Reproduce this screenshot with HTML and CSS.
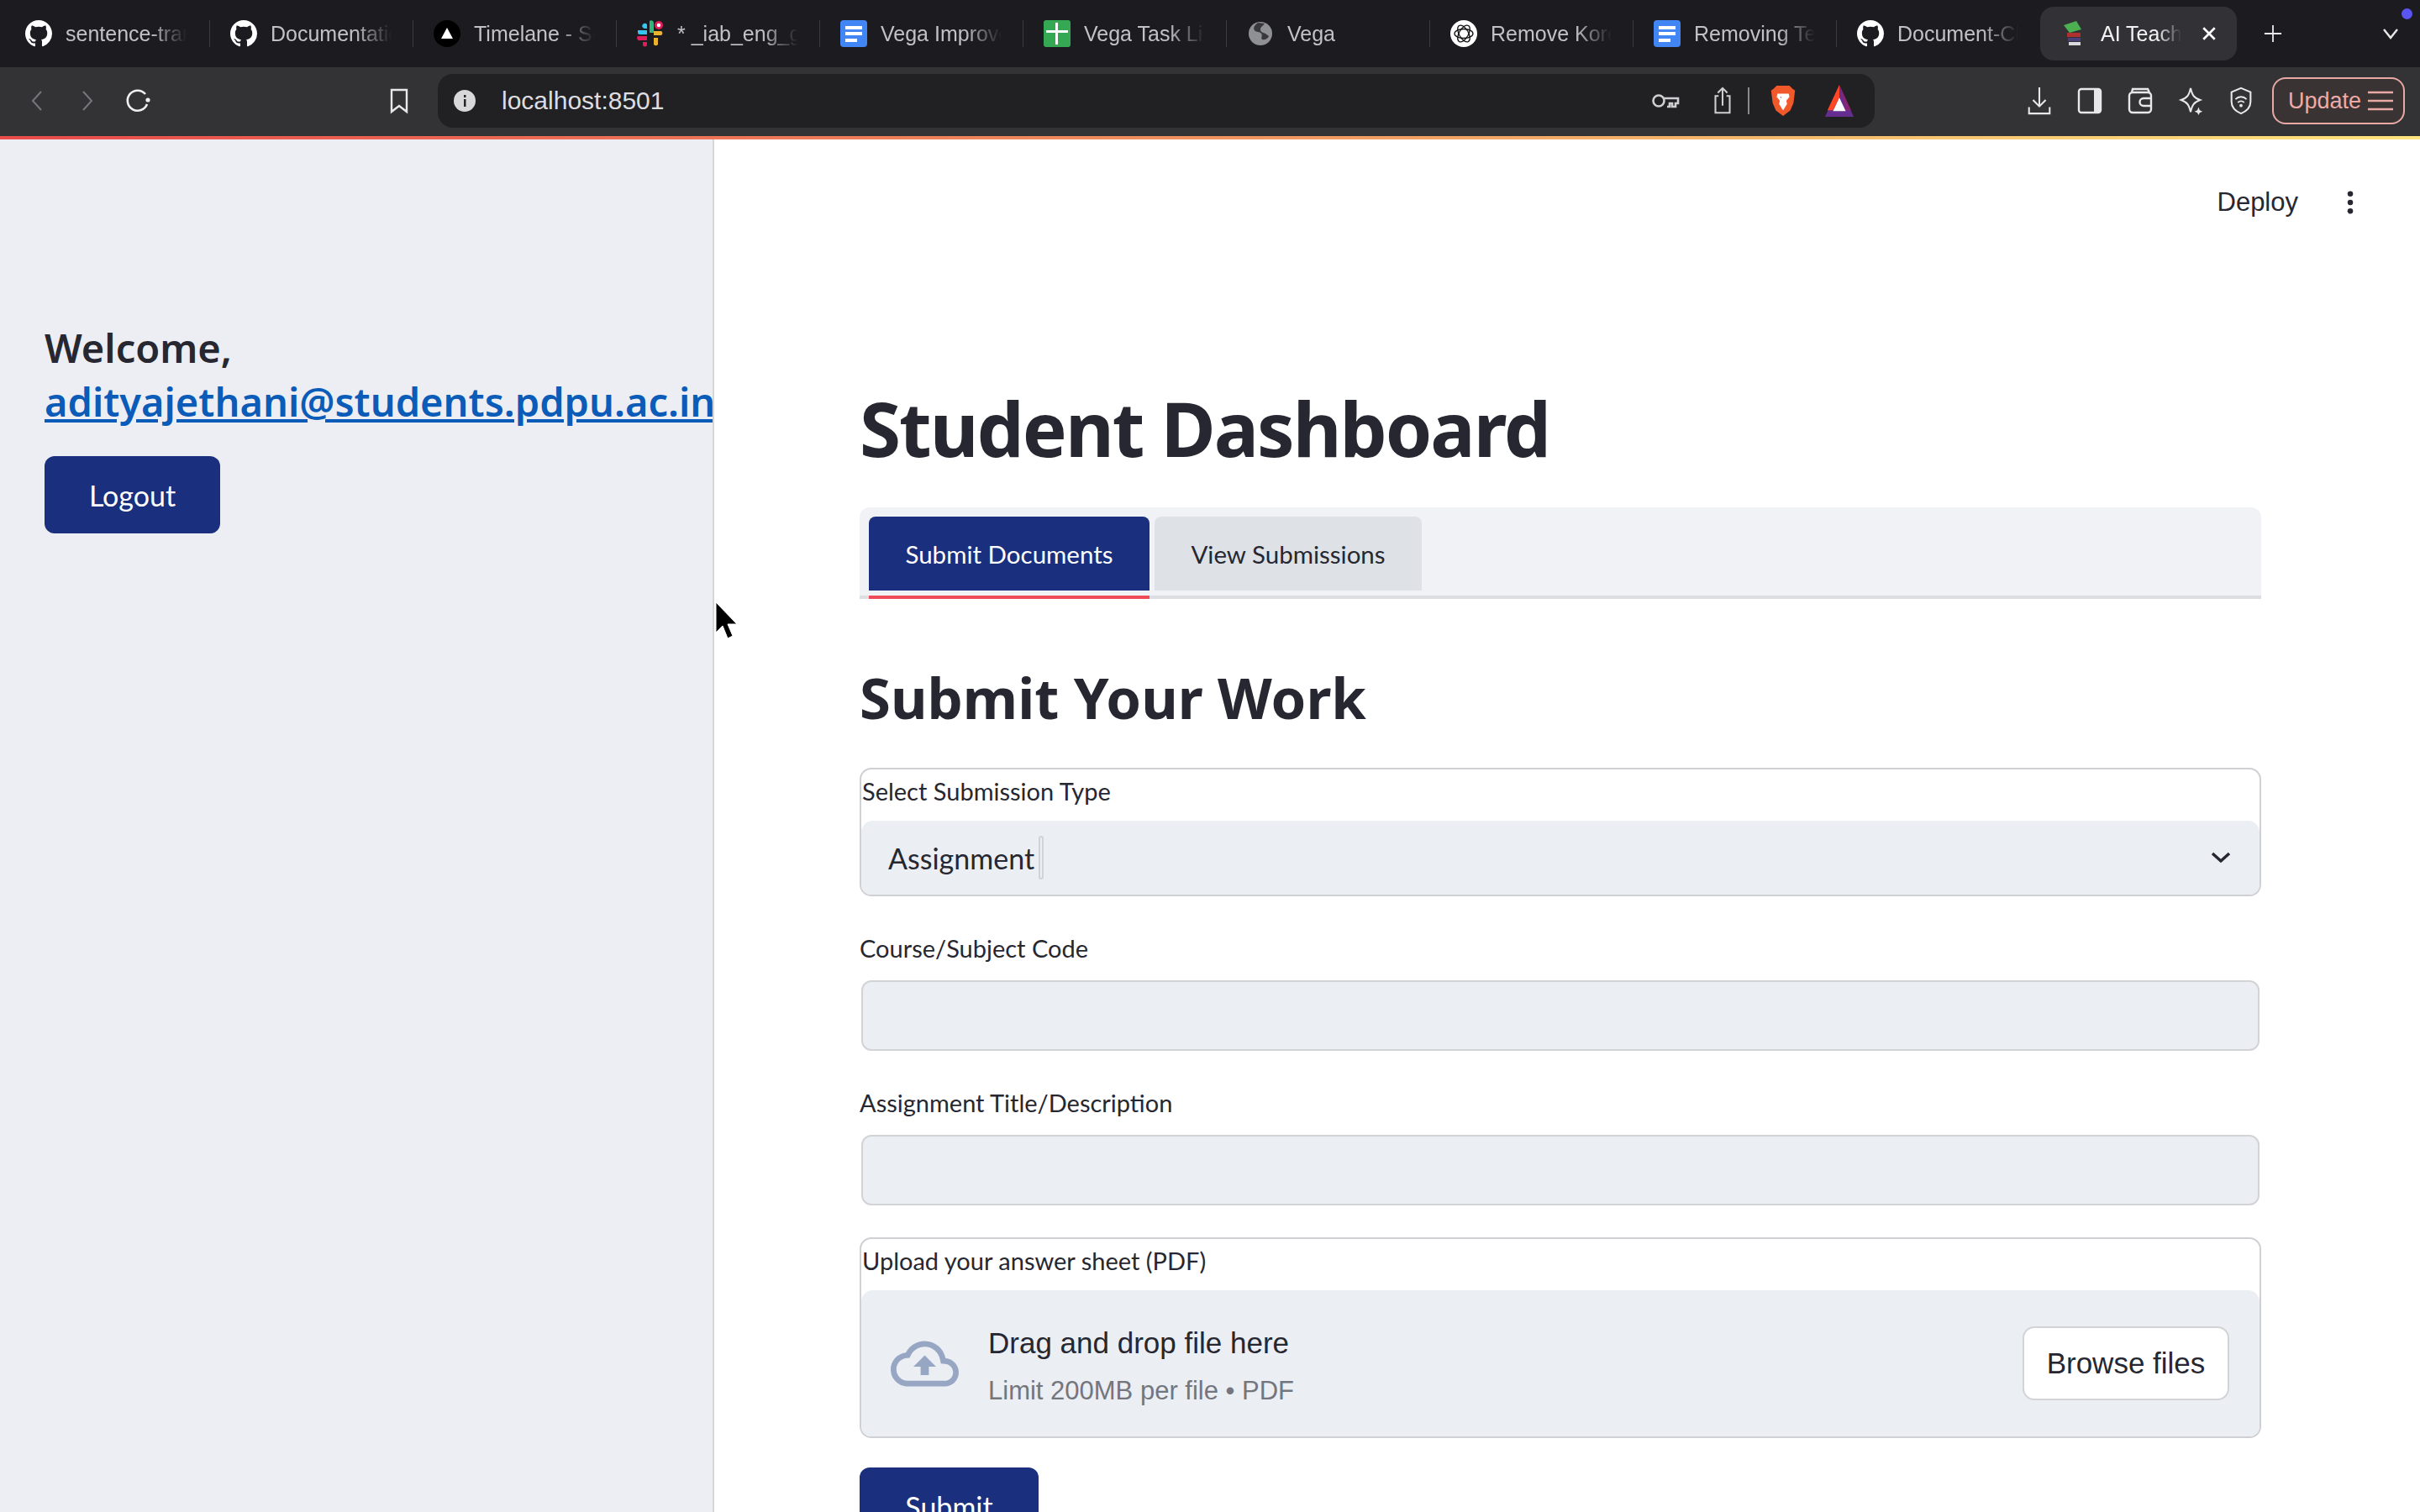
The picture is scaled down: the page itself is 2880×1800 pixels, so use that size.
FILE: index.html
```html
<!DOCTYPE html>
<html lang="en">
<head>
    <meta charset="UTF-8">
    <meta name="viewport" content="width=device-width, initial-scale=1.0">
    <title>AI Teacher</title>
    <link rel="stylesheet" href="styles.css">
</head>
<body>
    <svg class="icon-defs" width="0" height="0">
        <symbol id="github" viewBox="0 0 16 16"><path fill="#fff" d="M8 0C3.58 0 0 3.58 0 8c0 3.54 2.29 6.53 5.47 7.59.4.07.55-.17.55-.38 0-.19-.01-.82-.01-1.49-2.01.37-2.53-.49-2.69-.94-.09-.23-.48-.94-.82-1.13-.28-.15-.68-.52-.01-.53.63-.01 1.08.58 1.23.82.72 1.21 1.87.87 2.33.66.07-.52.28-.87.51-1.07-1.78-.2-3.64-.89-3.64-3.95 0-.87.31-1.59.82-2.15-.08-.2-.36-1.02.08-2.12 0 0 .67-.21 2.2.82.64-.18 1.32-.27 2-.27.68 0 1.36.09 2 .27 1.53-1.04 2.2-.82 2.2-.82.44 1.1.16 1.92.08 2.12.51.56.82 1.27.82 2.15 0 3.07-1.87 3.75-3.65 3.95.29.25.54.73.54 1.48 0 1.07-.01 1.93-.01 2.2 0 .21.15.46.55.38A8.013 8.013 0 0016 8c0-4.42-3.58-8-8-8z"/></symbol>
        <symbol id="gdoc" viewBox="0 0 32 32"><rect x="0" y="0" width="32" height="32" rx="4" fill="#4285f4"/><path fill="#fff" d="M6 7h20v4H6zM6 14h20v4H6zM6 22h14v4H6z"/></symbol>
    </svg>

    <div class="tabstrip">
        <div class="tab tab-first"><svg class="favicon"><use href="#github"/></svg><span class="tab-title">sentence-transformers</span></div>
        <div class="tab"><svg class="favicon"><use href="#github"/></svg><span class="tab-title">Documentation</span></div>
        <div class="tab">
            <svg class="favicon" viewBox="0 0 32 32"><circle cx="16" cy="16" r="16" fill="#000"/><path fill="#fff" d="M16 9l7 13H9z"/></svg>
            <span class="tab-title">Timelane - Scheduler</span>
        </div>
        <div class="tab">
            <svg class="favicon" viewBox="0 0 32 32">
                <path fill="#36c5f0" d="M1 12h11v5H3.500a2.500 2.500 0 0 1-2.500-2.500zM7 5a3 3 0 0 1 5 0v5H9a3 3 0 0 1-2-5z"/>
                <path fill="#2eb67d" d="M15 1a3 3 0 0 1 5 2v12h-5z"/>
                <circle cx="26" cy="6" r="5" fill="#e01e5a"/><circle cx="26" cy="6" r="2.200" fill="#fff"/>
                <path fill="#ecb22e" d="M20 13h9a3 3 0 0 1 0 5h-9zM20 21h5v8a3 3 0 0 1-5 0z"/>
                <path fill="#e01e5a" d="M1 19h11v5H4a3 3 0 0 1-3-5zM7 26h5v3a2.500 2.500 0 0 1-5 0z"/>
            </svg>
            <span class="tab-title">* _iab_eng_general</span>
        </div>
        <div class="tab"><svg class="favicon"><use href="#gdoc"/></svg><span class="tab-title">Vega Improvements</span></div>
        <div class="tab">
            <svg class="favicon" viewBox="0 0 32 32"><rect width="32" height="32" rx="3" fill="#34a853"/><path fill="#fff" d="M14 3h3v26h-3zM3 12h26v3H3z"/></svg>
            <span class="tab-title">Vega Task List</span>
        </div>
        <div class="tab">
            <svg class="favicon" viewBox="0 0 32 32"><circle cx="16" cy="16" r="14" fill="#8f9094"/><path fill="#1c1c20" d="M13 3c-4 3-6 6-4 9s6 1 8 4-1 5 1 7c3 1 7-1 8-4l-4-3c-3-1-6-2-6-5s3-4 5-7z" opacity=".75"/></svg>
            <span class="tab-title">Vega</span>
        </div>
        <div class="tab">
            <svg class="favicon" viewBox="0 0 32 32"><circle cx="16" cy="16" r="16" fill="#fff"/><g fill="none" stroke="#111" stroke-width="1.300"><ellipse cx="16" cy="16" rx="11" ry="5.500"/><ellipse cx="16" cy="16" rx="11" ry="5.500" transform="rotate(60 16 16)"/><ellipse cx="16" cy="16" rx="11" ry="5.500" transform="rotate(120 16 16)"/></g></svg>
            <span class="tab-title">Remove Korean</span>
        </div>
        <div class="tab"><svg class="favicon"><use href="#gdoc"/></svg><span class="tab-title">Removing Text</span></div>
        <div class="tab"><svg class="favicon"><use href="#github"/></svg><span class="tab-title">Document-Classifier</span></div>
        <div class="tab tab-active">
            <svg class="favicon" viewBox="0 0 32 32">
                <path fill="#4caf50" d="M4 6l15-5 6 10-14 4z"/>
                <path fill="#b03030" d="M8 15h16v5H8z"/>
                <path fill="#4a3f7a" d="M9 21h15v4H9z"/>
                <path fill="#d9d9e0" d="M10 26h14v4H10z"/>
            </svg>
            <span class="tab-title">AI Teacher</span>
            <svg class="tab-close" viewBox="0 0 16 16"><path stroke="#fff" stroke-width="2.400" d="M2 2l12 12M14 2L2 14"/></svg>
        </div>
        <svg class="new-tab" viewBox="0 0 24 24"><path stroke="#e8e8e8" stroke-width="2" d="M12 1v22M1 12h22"/></svg>
        <div class="strip-right">
            <svg class="strip-chevron" viewBox="0 0 20 14"><path fill="none" stroke="#e8e8e8" stroke-width="2.400" d="M2 2l8 10 8-10"/></svg>
        </div>
        <span class="notify-dot"></span>
    </div>

    <div class="toolbar">
        <svg class="nav-icon nav-back" viewBox="0 0 16 28"><path fill="none" stroke="#77777b" stroke-width="2" d="M13 3L3 14l10 11"/></svg>
        <svg class="nav-icon nav-forward" viewBox="0 0 16 28"><path fill="none" stroke="#77777b" stroke-width="2" d="M3 3l10 11L3 25"/></svg>
        <svg class="nav-icon nav-reload" viewBox="0 0 32 32"><path fill="none" stroke="#f0f0f0" stroke-width="2.600" d="M26 20a12 12 0 1 1-2-12"/><circle cx="27" cy="15" r="2.600" fill="#f0f0f0"/></svg>
        <svg class="nav-icon nav-bookmark" viewBox="0 0 24 32"><path fill="none" stroke="#e8e8e8" stroke-width="2.400" d="M3 3h18v26l-9-7-9 7z"/></svg>
        <div class="urlbar">
            <svg class="url-info" viewBox="0 0 26 26"><circle cx="13" cy="13" r="13" fill="#d8d8da"/><path fill="#26262a" d="M12 11h2.500v9H12zM12 6h2.500v3H12z"/></svg>
            <span class="url-text">localhost:8501</span>
            <div class="url-actions">
                <svg class="url-icon url-key" viewBox="0 0 34 26"><g fill="none" stroke="#cfcfd1" stroke-width="2.600"><circle cx="9" cy="13" r="6.500"/><path d="M15 10h17v6h-3v4h-4v-4h-3v4h-3"/></g></svg>
                <svg class="url-icon url-share" viewBox="0 0 26 36"><g fill="none" stroke="#cfcfd1" stroke-width="2.200"><path d="M8 12H4v21h18V12h-4M13 24V2M7 8l6-6 6 6"/></g></svg>
                <span class="url-divider"></span>
                <svg class="url-logo" viewBox="0 0 32 40"><path fill="#f1592a" d="M8 1h16l4 4 3 2-2 16-4 9-9 7-9-7-4-9L1 7l3-2z"/><path fill="#fff" d="M9 11h14l1 4-4 5 1 4-5 8-5-8 1-4-4-5zM12 15l2 2v-2zM20 15l-2 2v-2z"/></svg>
                <svg class="url-logo" viewBox="0 0 36 40"><path fill="#662d91" d="M18 0l18 40H0z"/><path fill="#ff4724" d="M18 0v16l-8 16H3z"/><path fill="#fff" d="M18 16l8 17H10z"/><path fill="#9e1f63" d="M18 0l15 32h-7z" opacity=".6"/></svg>
            </div>
        </div>
        <div class="toolbar-actions">
            <svg class="tool-icon" viewBox="0 0 30 36"><g fill="none" stroke="#e8e8e8" stroke-width="2.200"><path d="M15 1v24M7 17l8 8 8-8M2 26v8h26v-8"/></g></svg>
            <svg class="tool-icon" viewBox="0 0 30 32"><rect x="2" y="2" width="26" height="28" rx="3" fill="none" stroke="#e8e8e8" stroke-width="2.400"/><path fill="#e8e8e8" d="M20 2h8v28h-8z"/></svg>
            <svg class="tool-icon" viewBox="0 0 30 32"><g fill="none" stroke="#e8e8e8" stroke-width="2.400"><rect x="2" y="6" width="26" height="24" rx="4"/><path d="M5 6l1-4h18l2 4M28 13H19a4 4 0 0 0 0 9h9"/></g></svg>
            <svg class="tool-icon" viewBox="0 0 30 36"><path fill="none" stroke="#e8e8e8" stroke-width="2.200" d="M15 2c2 9 4 12 12 15-8 3-10 6-12 15-2-9-4-12-12-15 8-3 10-6 12-15z"/><path fill="#e8e8e8" d="M25 26l1.500 4 3.500 1.500-3.500 1.500-1.500 3-1.500-3-3.500-1.500 3.500-1.500z"/></svg>
            <svg class="tool-icon" viewBox="0 0 28 36"><path fill="none" stroke="#e8e8e8" stroke-width="2.200" d="M14 2l12 5v12c0 7-5 12-12 15C7 31 2 26 2 19V7z"/><path fill="none" stroke="#e8e8e8" stroke-width="2" d="M7 16c4-4 10-4 14 0M10 20c2.500-2 5.500-2 8 0"/><circle cx="14" cy="24" r="2" fill="#e8e8e8"/></svg>
            <div class="update-btn">
                <span>Update</span>
                <svg class="update-menu" viewBox="0 0 30 24"><path stroke="#e8a9a5" stroke-width="2.400" d="M0 2h30M0 12h30M0 22h30"/></svg>
            </div>
        </div>
    </div>
    <div class="load-line"></div>

    <div class="app">
        <aside class="sidebar">
            <h3 class="welcome">Welcome,<br><a class="email" href="#">adityajethani@students.pdpu.ac.in</a></h3>
            <button class="primary-btn logout-btn">Logout</button>
        </aside>

        <main class="main">
            <div class="app-header">
                <span class="deploy">Deploy</span>
                <svg class="kebab" viewBox="0 0 8 32"><circle cx="4" cy="5" r="3.500"/><circle cx="4" cy="16" r="3.500"/><circle cx="4" cy="27" r="3.500"/></svg>
            </div>

            <h1 class="page-title">Student Dashboard</h1>

            <div class="st-tabs">
                <div class="st-tab st-tab-active">Submit Documents</div>
                <div class="st-tab">View Submissions</div>
            </div>

            <h2 class="section-title">Submit Your Work</h2>

            <div class="boxed-field">
                <label class="boxed-label">Select Submission Type</label>
                <div class="select-control">
                    <span class="select-value">Assignment</span>
                    <span class="select-caret"></span>
                    <svg class="select-chevron" viewBox="0 0 24 14"><path fill="none" stroke="#262730" stroke-width="3.500" d="M2 2l10 9 10-9"/></svg>
                </div>
            </div>

            <label class="field-label label-course">Course/Subject Code</label>
            <div class="text-input"></div>

            <label class="field-label label-title">Assignment Title/Description</label>
            <div class="text-input"></div>

            <div class="boxed-field upload-field">
                <label class="boxed-label">Upload your answer sheet (PDF)</label>
                <div class="dropzone">
                    <svg class="cloud" viewBox="0 0 24 24"><path fill="#97a6c3" d="M19.350 10.040C18.670 6.590 15.640 4 12 4 9.110 4 6.600 5.640 5.350 8.040 2.340 8.360 0 10.910 0 14c0 3.310 2.690 6 6 6h13c2.760 0 5-2.240 5-5 0-2.640-2.050-4.780-4.650-4.960zM19 18H6c-2.210 0-4-1.790-4-4 0-2.050 1.530-3.760 3.560-3.970l1.070-.11.5-.95C8.080 7.140 9.940 6 12 6c2.620 0 4.880 1.860 5.390 4.430l.3 1.500 1.530.11c1.560.1 2.780 1.410 2.780 2.960 0 1.650-1.350 3-3 3zM8 13h2.550v3h2.900v-3H16l-4-4z"/></svg>
                    <div class="drop-text">
                        <div class="drop-title">Drag and drop file here</div>
                        <div class="drop-limit">Limit 200MB per file • PDF</div>
                    </div>
                    <button class="browse-btn">Browse files</button>
                </div>
            </div>

            <button class="primary-btn submit-btn">Submit</button>
        </main>
    </div>

    <svg class="mouse-cursor" viewBox="0 0 28 48"><path fill="#000" stroke="#fff" stroke-width="1" d="M1 1v36l8-8 6 15 6-3-6-14h11z"/></svg>
</body>
</html>
```

FILE: styles.css
```css
* {
    box-sizing: border-box;
}

html, body {
    margin: 0;
    height: 1800px;
    overflow: hidden;
    background-color: #fff;
}

body {
    display: flex;
    flex-direction: column;
    font-family: "Lato", "Noto Sans", sans-serif;
    color: #262730;
}

.icon-defs {
    position: absolute;
}

/* browser tabs */
.tabstrip {
    display: flex;
    align-items: center;
    height: 80px;
    padding-left: 6px;
    background-color: #1c1c20;
    font-family: "Liberation Sans", sans-serif;
    position: relative;
}

.tab {
    display: flex;
    align-items: center;
    width: 242px;
    height: 64px;
    padding-left: 24px;
    position: relative;
    flex-shrink: 0;
}

.tab-first {
    width: 244px;
}

.tab::after {
    content: "";
    position: absolute;
    right: 0;
    top: 16px;
    width: 1px;
    height: 32px;
    background-color: #3c3c40;
}

.tab:nth-child(10)::after,
.tab-active::after {
    display: none;
}

.favicon {
    width: 32px;
    height: 32px;
    flex-shrink: 0;
}

.tab-title {
    width: 144px;
    margin-left: 16px;
    font-size: 25px;
    color: #c2c2c5;
    white-space: nowrap;
    overflow: hidden;
    -webkit-mask-image: linear-gradient(to right, #000 70%, transparent 100%);
    mask-image: linear-gradient(to right, #000 70%, transparent 100%);
}

.tab-active {
    width: 234px;
    padding-left: 24px;
    background-color: #323236;
    border-radius: 16px;
}

.tab-active .tab-title {
    width: 96px;
    margin-left: 16px;
    color: #f2f2f2;
}

.tab-close {
    width: 18px;
    height: 18px;
    margin-left: 24px;
}

.new-tab {
    width: 22px;
    height: 22px;
    margin-left: 32px;
}

.strip-right {
    margin-left: auto;
    margin-right: 25px;
    display: flex;
}

.strip-chevron {
    width: 20px;
    height: 14px;
}

.notify-dot {
    position: absolute;
    left: 2858px;
    top: 10px;
    width: 13px;
    height: 13px;
    border-radius: 50%;
    background-color: #5a55f0;
}

/* browser toolbar */
.toolbar {
    display: flex;
    align-items: center;
    height: 82px;
    padding-bottom: 2px;
    background-color: #333336;
    flex-shrink: 0;
}

.nav-icon {
    flex-shrink: 0;
}

.nav-back {
    width: 16px;
    height: 28px;
    margin-left: 36px;
}

.nav-forward {
    width: 16px;
    height: 28px;
    margin-left: 44px;
}

.nav-reload {
    width: 32px;
    height: 32px;
    margin-left: 37px;
}

.nav-bookmark {
    width: 24px;
    height: 32px;
    margin-left: 282px;
}

.urlbar {
    display: flex;
    align-items: center;
    width: 1710px;
    height: 64px;
    margin-left: 34px;
    padding-left: 19px;
    padding-right: 25px;
    background-color: #212124;
    border-radius: 18px;
    flex-shrink: 0;
}

.url-info {
    width: 26px;
    height: 26px;
}

.url-text {
    margin-left: 31px;
    font-family: "Liberation Sans", sans-serif;
    font-size: 30px;
    color: #dedee0;
}

.url-actions {
    display: flex;
    align-items: center;
    margin-left: auto;
}

.url-icon {
    width: 34px;
    height: 34px;
}

.url-key {
    margin-right: 34px;
}

.url-share {
    margin-right: 13px;
}

.url-divider {
    width: 2px;
    height: 32px;
    margin-right: 23px;
    background-color: #8a8a8c;
}

.url-logo {
    width: 34px;
    height: 38px;
    margin-right: 33px;
}

.url-logo:last-child {
    margin-right: 0;
}

.toolbar-actions {
    display: flex;
    align-items: center;
    margin-left: 181px;
    gap: 30px;
}

.tool-icon {
    width: 30px;
    height: 34px;
}

.update-btn {
    display: flex;
    align-items: center;
    gap: 8px;
    width: 158px;
    height: 56px;
    padding-left: 17px;
    margin-left: -8px;
    border: 2px solid #e8a9a5;
    border-radius: 16px;
    background-color: #3a3333;
    font-family: "Liberation Sans", sans-serif;
    font-size: 27px;
    color: #eeaaa6;
}

.update-menu {
    width: 30px;
    height: 24px;
}

.load-line {
    height: 4px;
    flex-shrink: 0;
    background: linear-gradient(to right, #ea4b4b, #f08a5c 45%, #f5b56a 70%, #fde47c 100%);
}

/* streamlit app */
.app {
    display: flex;
    flex: 1;
    overflow: hidden;
}

.sidebar {
    width: 850px;
    padding: 216px 0 0 53px;
    background-color: #eceef3;
    border-right: 2px solid #d5d6da;
    overflow: hidden;
    flex-shrink: 0;
}

.welcome {
    margin: 0;
    font-family: "Noto Sans", sans-serif;
    font-size: 47px;
    line-height: 64px;
    font-weight: 600;
    white-space: nowrap;
}

.email {
    color: #0b5cb8;
}

.primary-btn {
    display: block;
    background-color: #1a2f7d;
    color: #fff;
    border: none;
    border-radius: 12px;
    font-family: inherit;
    font-size: 34px;
    cursor: pointer;
}

.logout-btn {
    width: 209px;
    height: 92px;
    margin-top: 33px;
}

.main {
    flex: 1;
    padding: 0 189px 0 173px;
}

.app-header {
    display: flex;
    align-items: center;
    justify-content: flex-end;
    gap: 58px;
    height: 150px;
    margin-right: -110px;
    font-family: "Liberation Sans", sans-serif;
    font-size: 31px;
}

.kebab {
    width: 8px;
    height: 30px;
    fill: #262730;
}

.page-title {
    margin: 144px 0 44px;
    font-family: "Noto Sans", sans-serif;
    font-size: 89px;
    line-height: 100px;
    font-weight: 700;
    letter-spacing: -2px;
}

.st-tabs {
    display: flex;
    gap: 6px;
    height: 109px;
    padding: 11px 0 0 11px;
    background-color: #f0f2f6;
    border-radius: 12px 12px 0 0;
    border-bottom: 4px solid #dcdde0;
}

.st-tab {
    display: flex;
    align-items: center;
    justify-content: center;
    width: 318px;
    height: 88px;
    background-color: #dee2e6;
    border-radius: 8px 8px 0 0;
    font-size: 29.5px;
}

.st-tab-active {
    width: 334px;
    background-color: #1a2f7d;
    color: #fff;
    position: relative;
}

.st-tab-active::after {
    content: "";
    position: absolute;
    left: 0;
    right: 0;
    bottom: -10px;
    height: 4px;
    background-color: #ee4b56;
}

.section-title {
    margin: 77px 0 44px;
    font-family: "Noto Sans", sans-serif;
    font-size: 67px;
    line-height: 80px;
    font-weight: 700;
}

.boxed-field {
    height: 153px;
    border: 2px solid #cfd0d3;
    border-radius: 14px;
    overflow: hidden;
}

.boxed-label {
    display: block;
    height: 61px;
    padding: 6px 0 0 1px;
    font-size: 29px;
    line-height: 40px;
}

.select-control {
    display: flex;
    align-items: center;
    height: 88px;
    padding: 0 34px 0 32px;
    background-color: #ebeef3;
    border-radius: 14px 14px 0 0;
}

.select-value {
    font-size: 34px;
}

.select-caret {
    width: 6px;
    height: 52px;
    margin-left: 5px;
    border: 2px solid #d0d3d9;
    border-radius: 3px;
}

.select-chevron {
    width: 24px;
    height: 14px;
    margin-left: auto;
}

.field-label {
    display: block;
    font-size: 29px;
    line-height: 40px;
}

.label-course {
    margin-top: 42px;
}

.label-title {
    margin-top: 42px;
}

.text-input {
    height: 84px;
    margin: 18px 2px 0;
    background-color: #ebeef3;
    border: 2px solid #d2d3d7;
    border-radius: 12px;
}

.upload-field {
    height: 239px;
    margin-top: 38px;
}

.dropzone {
    display: flex;
    align-items: center;
    height: 174px;
    padding: 0 36px 0 35px;
    background-color: #ebeef3;
    border-radius: 14px 14px 0 0;
}

.cloud {
    width: 81px;
    height: 81px;
    flex-shrink: 0;
}

.drop-text {
    margin: 6px 0 0 35px;
    font-family: "Liberation Sans", sans-serif;
}

.drop-title {
    font-size: 35px;
    line-height: 44px;
}

.drop-limit {
    margin-top: 15px;
    font-size: 31px;
    line-height: 40px;
    color: #74767e;
}

.browse-btn {
    width: 246px;
    height: 88px;
    margin-left: auto;
    background-color: #fff;
    border: 2px solid #d2d3d7;
    border-radius: 14px;
    font-family: "Liberation Sans", sans-serif;
    font-size: 35px;
    color: #262730;
}

.submit-btn {
    width: 213px;
    height: 92px;
    margin-top: 35px;
}

.mouse-cursor {
    position: absolute;
    left: 851px;
    top: 716px;
    width: 28px;
    height: 48px;
}
```
